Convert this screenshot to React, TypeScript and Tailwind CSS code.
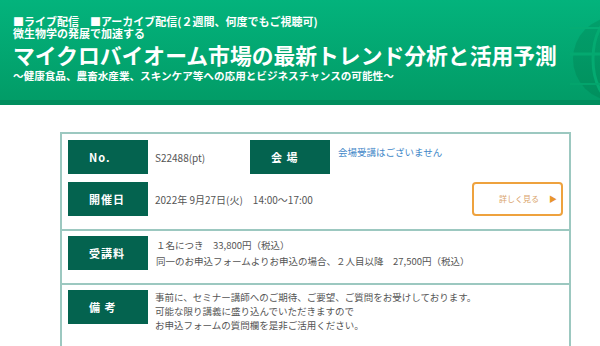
import React from "react"

const Label = ({ children }: { children: React.ReactNode }) => (
  <div className="flex h-[34px] w-[80px] shrink-0 items-center bg-[#04634f] pl-[21px] text-[11px] font-bold tracking-[1px] text-white">
    {children}
  </div>
)

export default function App() {
  return (
    <div className="min-h-[346px] w-[600px] overflow-hidden bg-white font-['Noto_Sans_CJK_JP','Noto_Sans',sans-serif]">
      {/* Banner */}
      <div className="relative h-[105px] overflow-hidden border-b-[5px] border-[#018e5e] bg-gradient-to-b from-[#03b37c] to-[#029c67] pl-[13px] pt-[15px] text-white">
        <svg className="absolute left-[570px] top-[14px]" width="90" height="90" viewBox="0 0 90 90">
          <circle cx="45" cy="45" r="42" fill="rgba(0,80,45,0.16)" />
          <ellipse cx="45" cy="45" rx="22" ry="42" fill="none" stroke="#04aa71" strokeWidth="3" />
          <line x1="0" y1="40" x2="90" y2="40" stroke="#04a970" strokeWidth="3" />
          <line x1="0" y1="14" x2="90" y2="14" stroke="#05ad74" strokeWidth="2" />
          <line x1="0" y1="70" x2="90" y2="70" stroke="#03a46c" strokeWidth="2" />
        </svg>
        <p className="text-[11px] font-bold leading-[12px]">■ライブ配信　■アーカイブ配信(２週間、何度でもご視聴可)</p>
        <p className="text-[11px] font-bold leading-[12px]">微生物学の発展で加速する</p>
        <h1 className="mt-[3px] text-[21.8px] font-bold leading-[25px]">マイクロバイオーム市場の最新トレンド分析と活用予測</h1>
        <p className="mt-[2px] text-[10.6px] font-bold leading-[14px]">～健康食品、農畜水産業、スキンケア等への応用とビジネスチャンスの可能性～</p>
      </div>

      {/* Details box */}
      <div className="ml-[60px] mt-[27px] w-[511px] border-2 border-b-0 border-[#9cc8c0] text-[9.5px] text-[#555]">
        <div className="border-b-2 border-[#9cc8c0] px-[6px] pb-[13px] pt-[6px]">
          <div className="flex">
            <Label>No.</Label>
            <div className="flex w-[102px] items-center pl-[7px] text-[10px]">S22488(pt)</div>
            <Label>会 場</Label>
            <div className="pl-[8px] pt-[5px] text-[#3f87c8]">会場受講はございません</div>
          </div>
          <div className="mt-[8px] flex items-center">
            <Label>開催日</Label>
            <div className="pl-[7px] text-[10px]">2022年 9月27日(火)　14:00～17:00</div>
            <button className="ml-auto flex h-[34px] w-[91px] items-center rounded-[4px] border-2 border-[#eea23e] bg-white pl-[25px] text-[8px] text-[#d9a46c]">
              詳しく見る
              <span className="ml-auto mr-[4px] text-[8px] text-[#e8962c]">▶</span>
            </button>
          </div>
        </div>

        <div className="flex items-center border-b-2 border-[#9cc8c0] px-[6px] pb-[13px] pt-[5px]">
          <Label>受講料</Label>
          <div className="pl-[8px] leading-[16px]">
            <p>１名につき　33,800円（税込）</p>
            <p>同一のお申込フォームよりお申込の場合、２人目以降　27,500円（税込）</p>
          </div>
        </div>

        <div className="flex items-start px-[6px] pb-[20px] pt-[5px]">
          <Label>備 考</Label>
          <div className="pl-[7px] leading-[14px]">
            <p>事前に、セミナー講師へのご期待、ご要望、ご質問をお受けしております。</p>
            <p>可能な限り講義に盛り込んでいただきますので</p>
            <p>お申込フォームの質問欄を是非ご活用ください。</p>
          </div>
        </div>
      </div>
    </div>
  )
}
